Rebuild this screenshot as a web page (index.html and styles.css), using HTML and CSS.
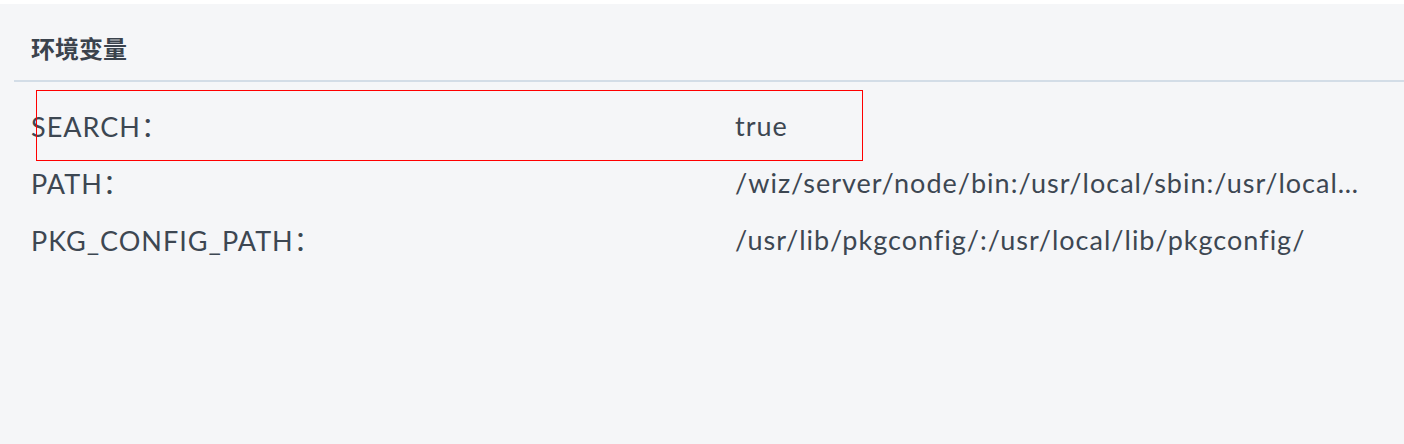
FILE: index.html
```html
<!DOCTYPE html>
<html lang="zh-CN">
<head>
<meta charset="utf-8">
<title>环境变量</title>
<link rel="stylesheet" href="styles.css">
</head>
<body>
<div class="page">
  <section class="panel">
    <header class="panel-header">
      <h2 class="panel-title">环境变量</h2>
    </header>
    <div class="env-list">
      <div class="env-row">
        <span class="env-key">SEARCH：</span>
        <span class="env-value">true</span>
      </div>
      <div class="env-row">
        <span class="env-key">PATH：</span>
        <span class="env-value">/wiz/server/node/bin:/usr/local/sbin:/usr/local/bin:/usr/sbin:/usr/bin:/sbin:/bin</span>
      </div>
      <div class="env-row">
        <span class="env-key">PKG_CONFIG_PATH：</span>
        <span class="env-value">/usr/lib/pkgconfig/:/usr/local/lib/pkgconfig/</span>
      </div>
    </div>
  </section>
  <div class="highlight-box"></div>
</div>
</body>
</html>
```
FILE: styles.css
```css
html, body {
  margin: 0;
  padding: 0;
  background: #ffffff;
}
body {
  font-family: Lato, "Noto Sans CJK SC", sans-serif;
  color: #3d4752;
}
.page {
  position: relative;
  padding-top: 4px;
  height: 440px;
}
.panel {
  background: #f5f6f8;
  height: 440px;
}
.panel-header {
  margin-left: 14px;
  height: 66px;
  padding-top: 10px;
  padding-left: 17px;
  display: flex;
  align-items: center;
  border-bottom: 2px solid #d3dde7;
}
.panel-title {
  margin: 0;
  font-family: Lato, "Noto Sans CJK SC", sans-serif;
  font-size: 24px;
  font-weight: 700;
  color: #3b434d;
}
.env-list {
  padding-top: 15px;
  padding-left: 31px;
}
.env-row {
  display: grid;
  grid-template-columns: 704px 636px;
  height: 57px;
  align-items: center;
  font-size: 27px;
  letter-spacing: 1px;
}
.env-key,
.env-value {
  white-space: nowrap;
  overflow: hidden;
  text-overflow: ellipsis;
}
.highlight-box {
  position: absolute;
  left: 36px;
  top: 90px;
  width: 825px;
  height: 69px;
  border: 1px solid #ff0000;
}
```
